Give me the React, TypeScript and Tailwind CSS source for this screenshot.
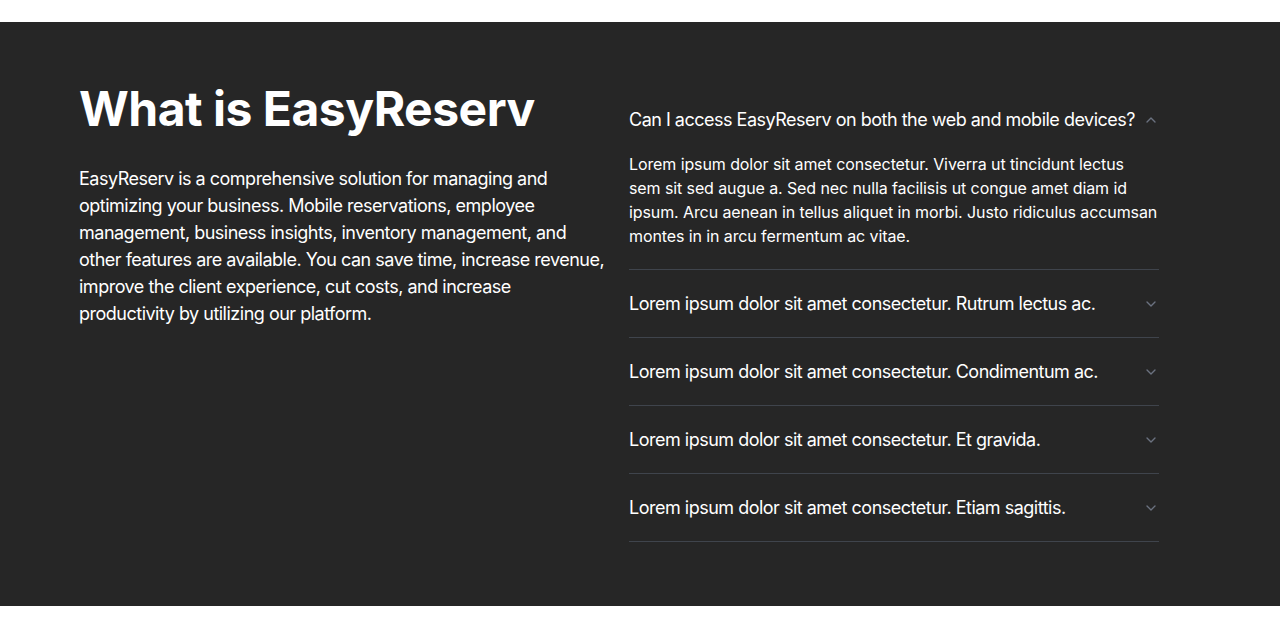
import { useState } from "react"
import { ChevronDown, ChevronUp } from "lucide-react"

const faqs = [
  {
    q: "Can I access EasyReserv on both the web and mobile devices?",
    a: "Lorem ipsum dolor sit amet consectetur. Viverra ut tincidunt lectus sem sit sed augue a. Sed nec nulla facilisis ut congue amet diam id ipsum. Arcu aenean in tellus aliquet in morbi. Justo ridiculus accumsan montes in in arcu fermentum ac vitae.",
  },
  { q: "Lorem ipsum dolor sit amet consectetur. Rutrum lectus ac.", a: "Lorem ipsum dolor sit amet consectetur." },
  { q: "Lorem ipsum dolor sit amet consectetur. Condimentum ac.", a: "Lorem ipsum dolor sit amet consectetur." },
  { q: "Lorem ipsum dolor sit amet consectetur. Et gravida.", a: "Lorem ipsum dolor sit amet consectetur." },
  { q: "Lorem ipsum dolor sit amet consectetur. Etiam sagittis.", a: "Lorem ipsum dolor sit amet consectetur." },
]

export default function App() {
  const [open, setOpen] = useState<number | null>(0)

  return (
    <div className="min-h-screen bg-white pt-[22px] font-['Inter',sans-serif]">
      <section className="bg-[#262626] pt-[64px] pb-[64px] pl-[79px]">
        <div className="flex gap-[22px]">
          {/* Intro */}
          <div className="w-[528px]">
            <h2 className="-mt-[1px] text-[48px] font-bold leading-[48px] tracking-[-0.5px] text-white">
              What is EasyReserv
            </h2>
            <p className="mt-[32px] text-[18px] leading-[27px] tracking-[-0.5px] text-white">
              EasyReserv is a comprehensive solution for managing and optimizing your business. Mobile reservations,
              employee management, business insights, inventory management, and other features are available. You can
              save time, increase revenue, improve the client experience, cut costs, and increase productivity by
              utilizing our platform.
            </p>
          </div>

          {/* FAQ */}
          <div className="w-[530px]">
            {faqs.map((item, i) => {
              const isOpen = open === i
              return (
                <div key={i} className="border-b border-[#3f444c]">
                  <button
                    onClick={() => setOpen(isOpen ? null : i)}
                    className="flex h-[67px] w-full items-center justify-between text-left text-[18px] tracking-[-0.5px] text-white"
                  >
                    <span>{item.q}</span>
                    {isOpen ? (
                      <ChevronUp className="h-[16px] w-[16px] text-[#6b7280]" strokeWidth={2} />
                    ) : (
                      <ChevronDown className="h-[16px] w-[16px] text-[#6b7280]" strokeWidth={2} />
                    )}
                  </button>
                  {isOpen && (
                    <p className="-mt-[1px] pb-[21px] text-[16px] leading-[24px] tracking-[-0.1px] text-white">
                      {item.a}
                    </p>
                  )}
                </div>
              )
            })}
          </div>
        </div>
      </section>
    </div>
  )
}
